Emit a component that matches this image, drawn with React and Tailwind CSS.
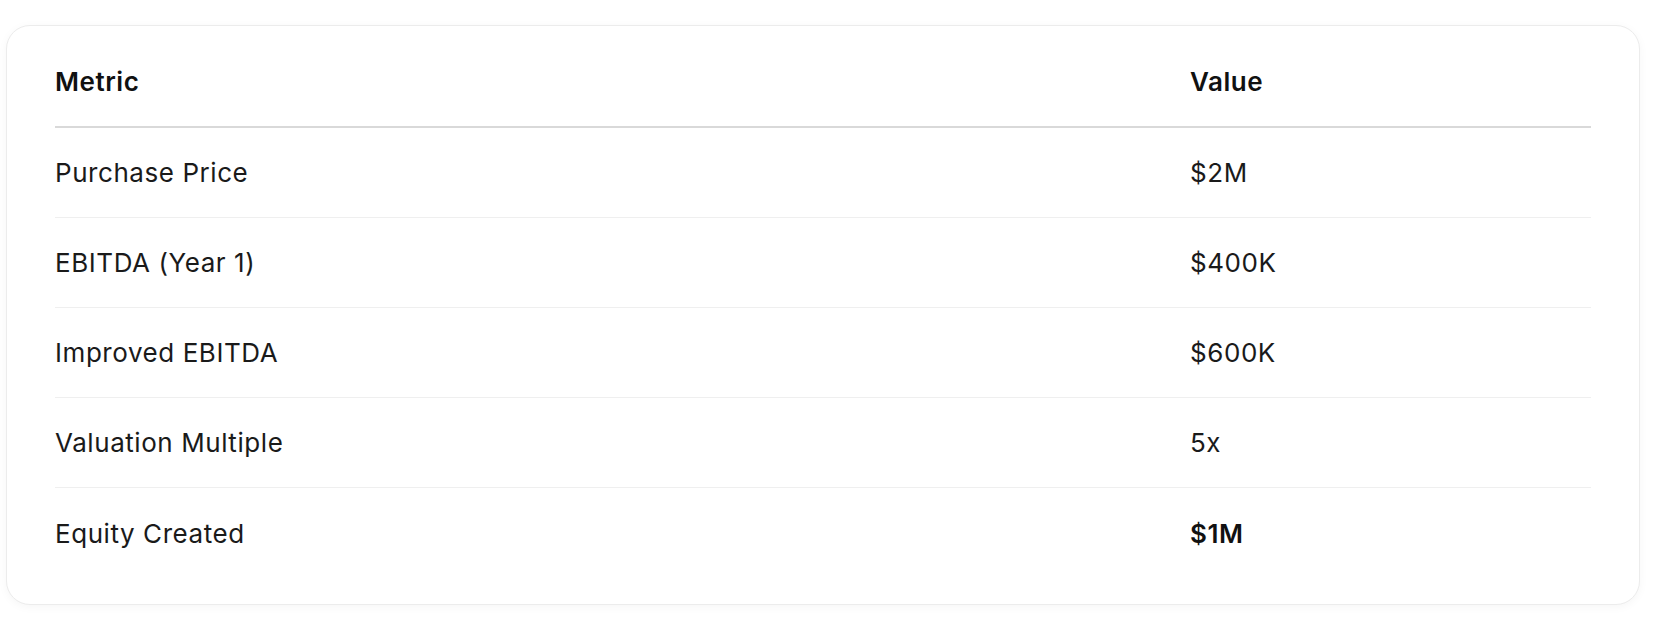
const rows = [
  { metric: 'Purchase Price', value: '$2M' },
  { metric: 'EBITDA (Year 1)', value: '$400K' },
  { metric: 'Improved EBITDA', value: '$600K' },
  { metric: 'Valuation Multiple', value: '5x' },
  { metric: 'Equity Created', value: '$1M', strong: true },
];

export default function App() {
  return (
    <div className="min-h-[620px] bg-white pt-[25px] pl-[6px] font-['Inter',sans-serif] tracking-[0.035em]">
      <div className="w-[1634px] rounded-[24px] border border-[#ececec] bg-white px-[48px] pt-[11px] pb-[26px] shadow-[0_2px_10px_rgba(0,0,0,0.04)]">
        <div className="flex h-[91px] items-center border-b-2 border-[#d9d9d9] text-[26px] font-semibold text-[#111]">
          <div className="w-[1135px]">Metric</div>
          <div>Value</div>
        </div>
        {rows.map((row, i) => (
          <div
            key={row.metric}
            className={
              'flex h-[90px] items-center text-[26px] text-[#1a1a1a] ' +
              (i < rows.length - 1 ? 'border-b border-[#efefef]' : 'h-[89px]')
            }
          >
            <div className="w-[1135px]">{row.metric}</div>
            <div className={row.strong ? 'font-semibold text-[#111]' : ''}>{row.value}</div>
          </div>
        ))}
      </div>
    </div>
  );
}
